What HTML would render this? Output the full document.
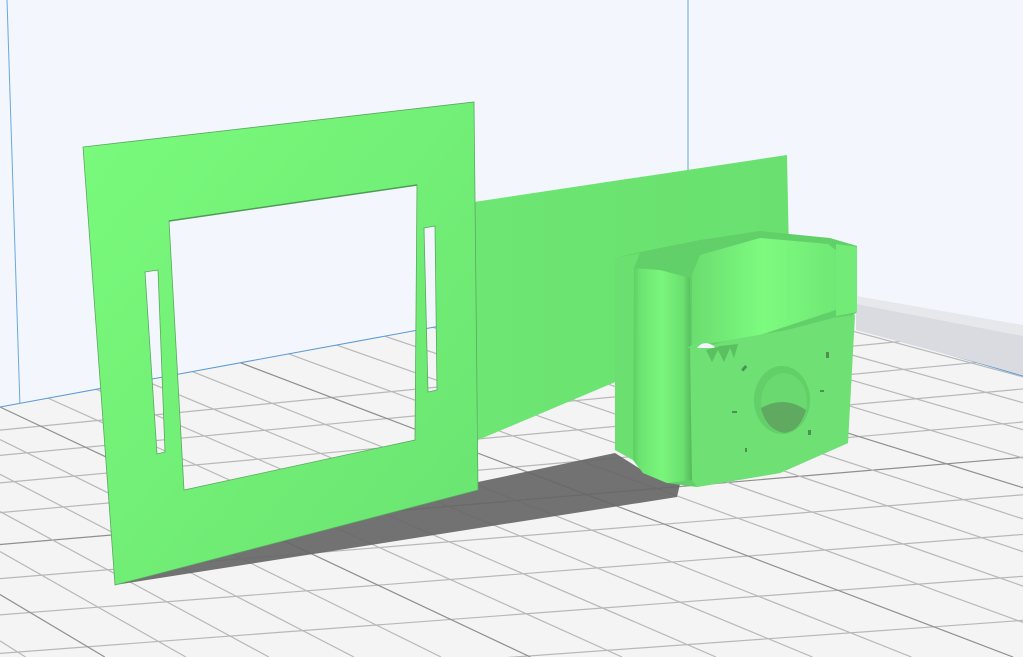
<!DOCTYPE html>
<html><head><meta charset="utf-8">
<style>html,body{margin:0;padding:0;background:#f3f6fc;overflow:hidden;width:1023px;height:657px}svg{display:block;position:absolute;left:0;top:0}</style>
</head><body>
<svg id="s" width="1023" height="657" viewBox="0 0 1023 657" xmlns="http://www.w3.org/2000/svg" overflow="hidden">
<defs>
<clipPath id="fc"><polygon points="0,407 690,280 858,328 1023,376 1023,657 0,657"/></clipPath>
<linearGradient id="gf" x1="0" y1="0" x2="1" y2="1"><stop offset="0" stop-color="#7afb7c"/><stop offset="1" stop-color="#6ae371"/></linearGradient>
<linearGradient id="gp" x1="0" y1="0" x2="1" y2="0"><stop offset="0" stop-color="#6ee673"/><stop offset="1" stop-color="#69e06f"/></linearGradient>
<linearGradient id="gpil" x1="0" y1="0" x2="1" y2="0"><stop offset="0" stop-color="#5ccc62"/><stop offset="0.15" stop-color="#6ce672"/><stop offset="0.5" stop-color="#7af57c"/><stop offset="0.85" stop-color="#6be070"/><stop offset="1" stop-color="#55b85b"/></linearGradient>
<linearGradient id="gin" x1="0" y1="0" x2="1" y2="0"><stop offset="0" stop-color="#6bdd70"/><stop offset="0.5" stop-color="#7dfb7f"/><stop offset="1" stop-color="#70e875"/></linearGradient>
</defs>
<rect width="1023" height="657" fill="#f3f6fc"/>
<line x1="7" y1="0" x2="28" y2="657" stroke="#6aa8e0" stroke-width="1"/>
<line x1="688" y1="0" x2="688" y2="170" stroke="#6aa8e0" stroke-width="1"/>
<polygon points="0,407 690,280 858,328 1023,376 1023,657 0,657" fill="#f4f4f4"/>
<g id="grid" clip-path="url(#fc)" stroke="#b8b8b8" stroke-width="1.2"></g>
<polyline points="0,407 690,280" stroke="#5b9ad8" stroke-width="1" fill="none"/>
<polyline points="858,328 1023,376" stroke="#5b9ad8" stroke-width="1" fill="none"/>
<polygon points="856,300 1023,333 1023,375 856,330" fill="#d9dbe0"/>
<polygon points="856,296 1023,325 1023,336 856,304" fill="#e6e8ec"/>
<polygon points="115,585 478,490 478,482 615,453 645,472 680,484 677,497" fill="#666" opacity="0.92"/>
<polygon points="474,202 787,155 790,305 620,380 478,440" fill="url(#gp)"/>
<path fill-rule="evenodd" fill="url(#gf)" stroke="#5aa860" stroke-width="0.8" d="M83,147 L474,102 L478,490 L115,585 Z M169,221 L417,185 L415,440 L184,490 Z M145,272 L158,270 L165,452 L157,454 Z M424,228 L435,226 L437,390 L428,392 Z"/>
<polyline points="169,221 417,185" stroke="#4f9c55" stroke-width="1.5" fill="none"/>
<path fill="#62d068" d="M615,258 L640,252 L700,240 L760,231 L830,238 L857,246 L857,312 L850,318 L848,443 L780,473 L697,487 L667,483 L643,473 L633,460 L615,450 Z"/>
<path fill="url(#gin)" d="M692,275 L700,255 L760,238 L828,244 L836,250 L836,310 L760,335 L720,342 L692,345 Z"/>
<path fill="url(#gpil)" d="M632,268 L660,270 L690,278 L692,480 L667,483 L643,473 L633,460 Z"/>
<path fill="#6be070" d="M615,258 L640,253 L634,268 L633,460 L615,450 Z"/>
<path fill="#72ec77" d="M836,244 L857,247 L857,312 L836,316 Z"/>
<path fill="#6ee074" d="M687,348 L700,340 L712,345 L730,340 L787,330 L833,318 L855,315 L848,443 L780,473 L697,487 L692,480 L690,348 Z"/>
<path fill="#f3f6fc" d="M697,348 Q705,338 716,348 Z"/>
<path fill="#5ac060" d="M706,350 L712,362 L718,350 L724,362 L730,348 L734,358 L738,344 L720,346 Z"/>
<ellipse cx="782" cy="400" rx="28" ry="34" fill="#62cf68"/>
<ellipse cx="784" cy="403" rx="23" ry="30" fill="#6ad96f"/>
<path d="M761,408 Q784,395 806,410 Q800,432 784,433 Q766,430 761,408 Z" fill="#5faa60"/>
<g fill="#4f8f52"><rect x="745" y="365" width="3" height="6" transform="rotate(40 745 365)"/><rect x="826" y="352" width="3" height="6"/><rect x="820" y="390" width="4" height="2"/><rect x="732" y="411" width="5" height="2"/><rect x="808" y="430" width="3" height="5"/><rect x="745" y="448" width="2" height="4"/></g>
</svg>
<script>
(function(){
var g=document.getElementById('grid'),ns='http://www.w3.org/2000/svg';
function L(x1,y1,x2,y2,c){var l=document.createElementNS(ns,'line');l.setAttribute('x1',x1);l.setAttribute('y1',y1);l.setAttribute('x2',x2);l.setAttribute('y2',y2);if(c)l.setAttribute('stroke',c);g.appendChild(l);}
for(var i=1;i<12;i++){var y=407+22*i*(1+0.05*i);var s=-0.185+0.006*i;L(0,y,1023,y+s*1023*0.55,(i%5==0)?'#8f8f8f':null);}
var vx=-1500,vy=-300;
for(var j=-24;j<22;j++){var bx=j*48,by=407-0.185*bx;var dx=bx-vx,dy=by-vy;var t=(657-by)/dy;var ex=bx+dx*t;if(ex<0)continue;var sx=bx,sy=by;if(sx<0){var k=(0-bx)/dx;sx=0;sy=by+dy*k;}L(sx,sy,Math.min(ex,1023),ex>1023?by+dy*((1023-bx)/dx):657,(j%5==0)?'#8f8f8f':null);}
})();
</script>
</body></html>
